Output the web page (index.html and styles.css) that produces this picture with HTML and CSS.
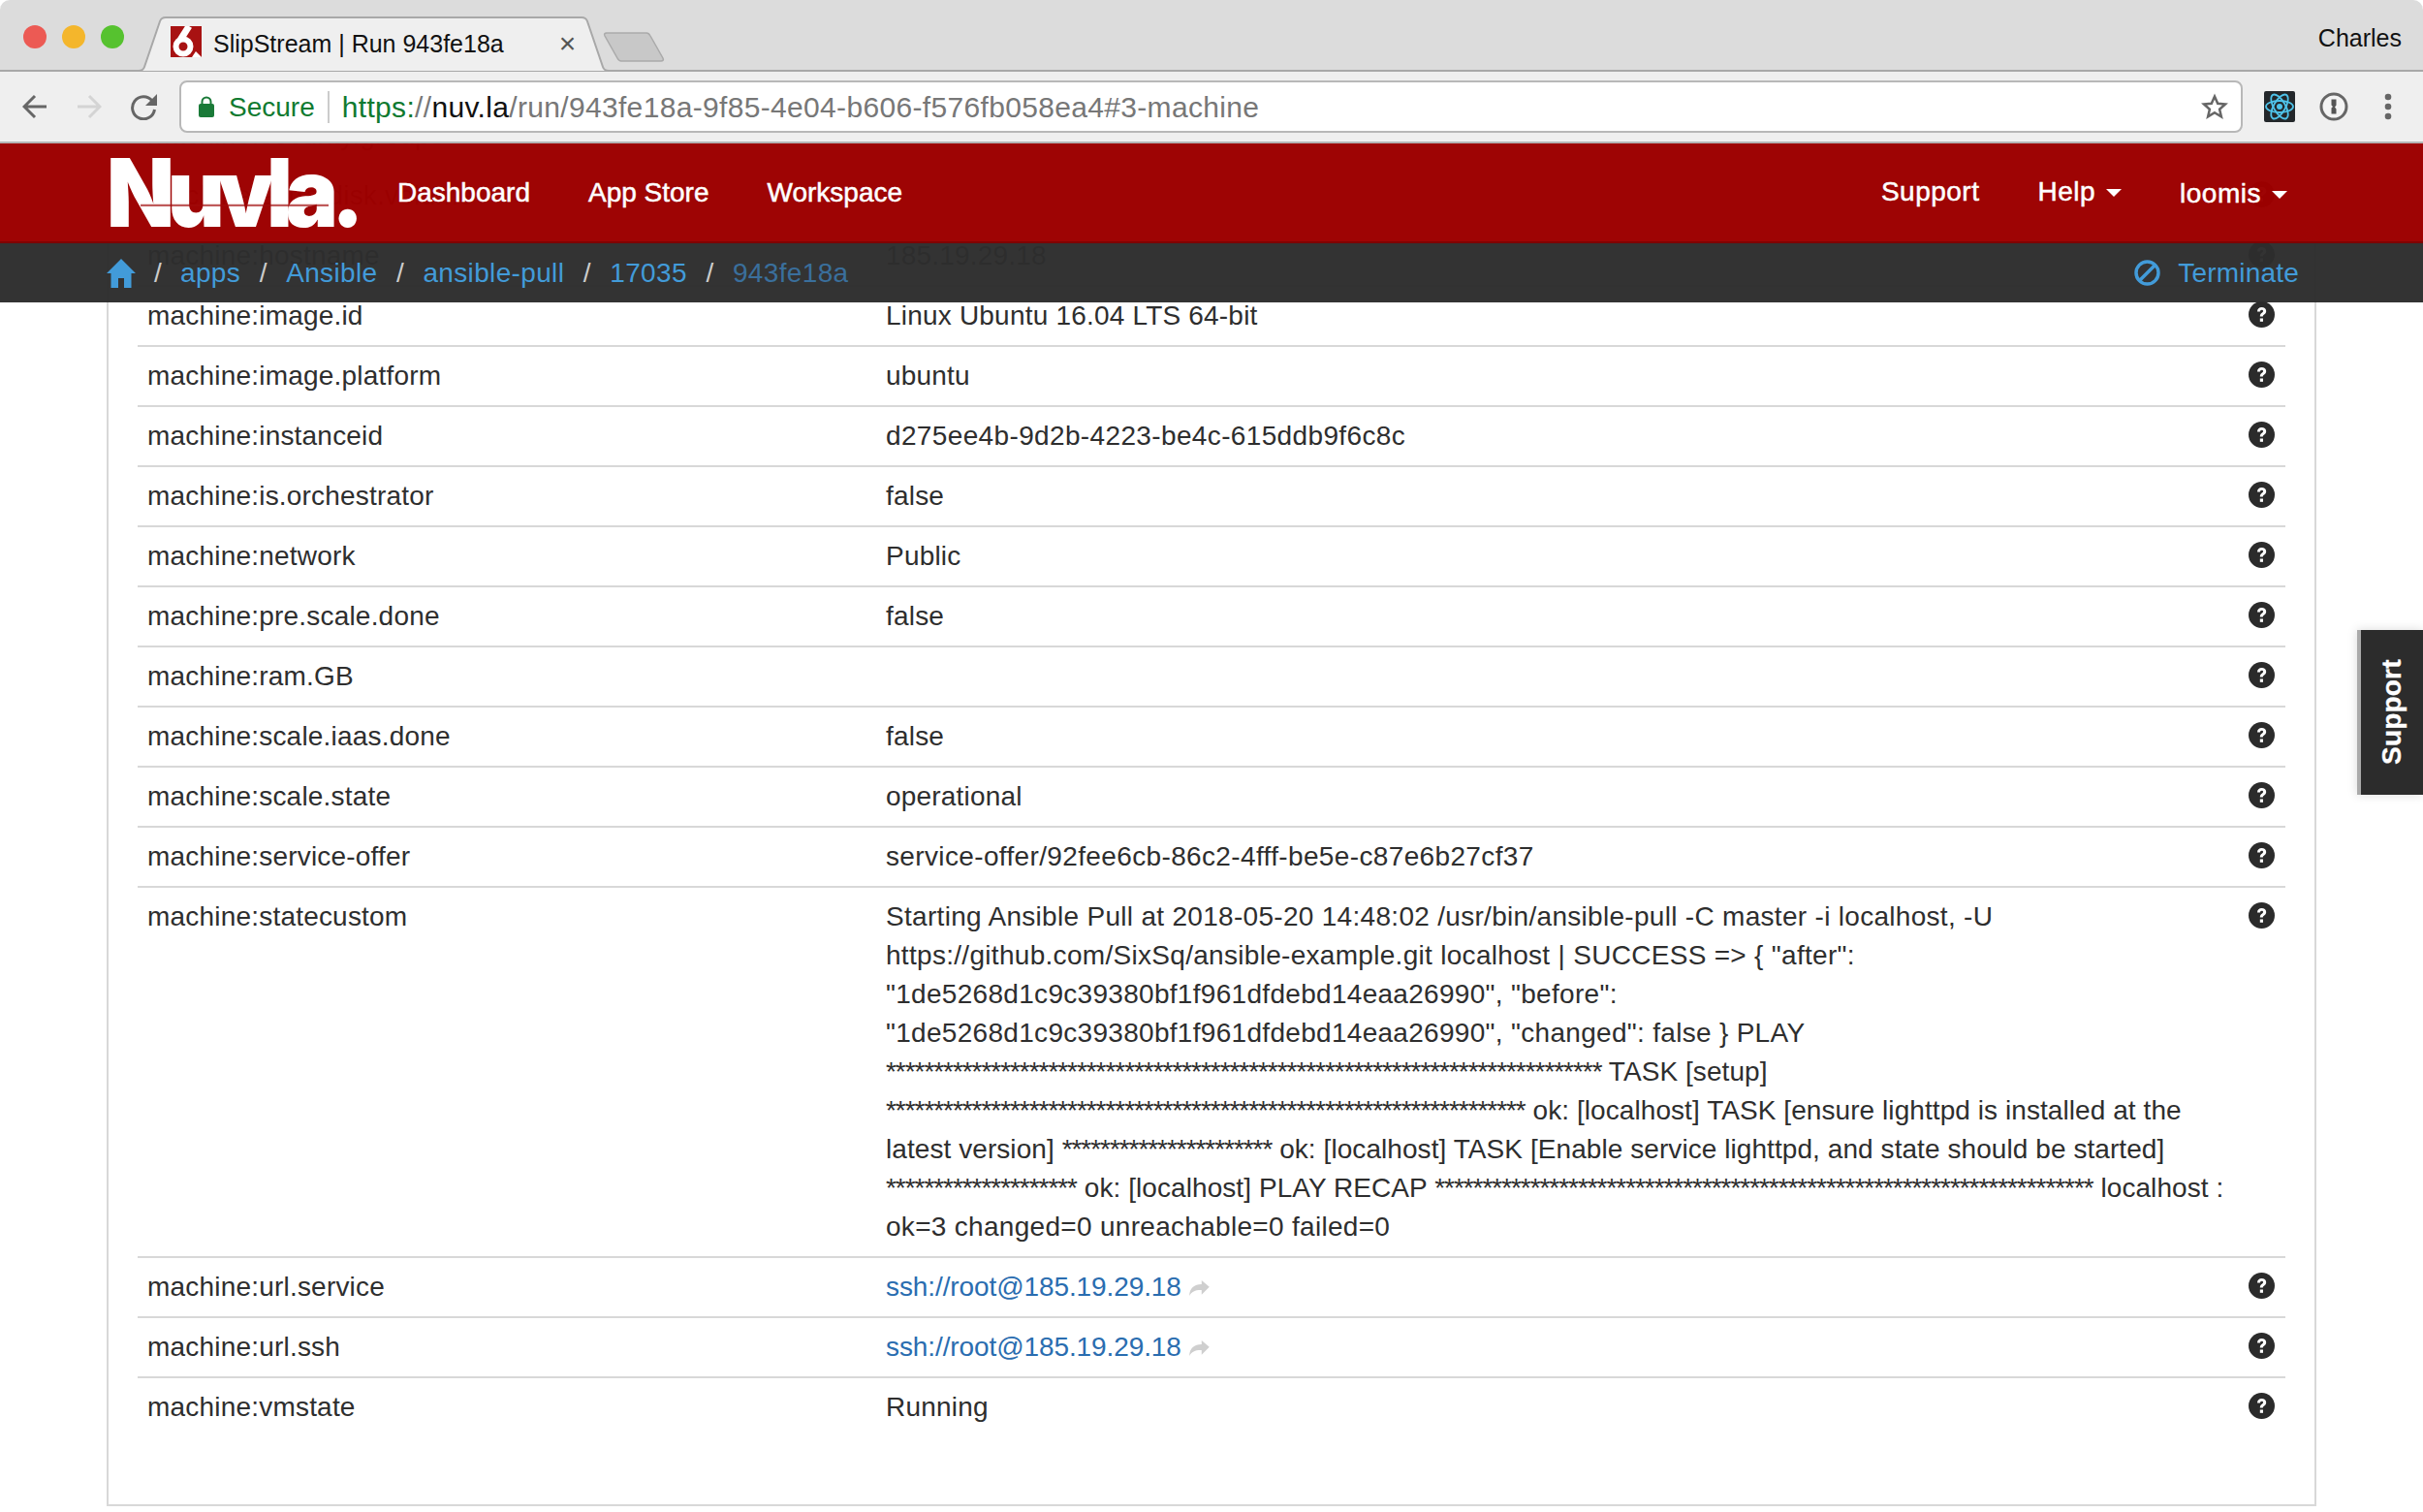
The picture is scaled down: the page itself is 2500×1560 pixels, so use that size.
FILE: index.html
```html
<!DOCTYPE html>
<html lang="en">
<head>
    <meta charset="UTF-8">
    <title>SlipStream | Run 943fe18a</title>
    <link rel="stylesheet" href="styles.css">
</head>
<body>
    <svg class="defs" width="0" height="0">
        <symbol id="help" viewBox="0 0 27 27">
            <circle cx="13.5" cy="13.5" r="13.5" fill="#2b2b2b"/>
            <path d="M9 10.5c0-2.8 2-4.5 4.6-4.5 2.5 0 4.6 1.6 4.6 4 0 3.4-3.4 3.2-3.4 5.6h-3c0-4 3.3-3.800 3.300-5.500 0-.9-.7-1.400-1.500-1.400-1 0-1.600.7-1.700 1.800z" fill="#fff"/>
            <rect x="11.800" y="17.500" width="3.200" height="3.300" fill="#fff"/>
        </symbol>
        <symbol id="share" viewBox="0 0 18 14">
            <path d="M18 6 11 0v3.500C4.500 3.500 0 7 0 14c2-4 5.500-5.500 11-5.300V13z" fill="#cfcfcf"/>
        </symbol>
    </svg>

    <div class="tabstrip">
        <div class="lights">
            <span class="light red"></span>
            <span class="light amber"></span>
            <span class="light green"></span>
        </div>
        <div class="tab">
            <svg class="tab-shape" viewBox="0 0 485 57" width="485" height="57">
                <path d="M0 56c3 0 5-1 6-4L22 5c1-3 3-4 6-4h429c3 0 5 1 6 4l16 47c1 3 3 4 6 4" fill="#efefef" stroke="#a8a8a8" stroke-width="2"/>
            </svg>
            <svg class="favicon" viewBox="0 0 32 32" width="32" height="32">
                <rect width="32" height="32" fill="#a81212"/>
                <path d="M19 0 7 19" stroke="#fff" stroke-width="7"/>
                <circle cx="13" cy="21" r="7.500" fill="#a81212" stroke="#fff" stroke-width="6"/>
                <path d="M22 32l4-6 6 6z" fill="#fff"/>
            </svg>
            <span class="tab-title">SlipStream | Run 943fe18a</span>
            <span class="tab-close">×</span>
        </div>
        <svg class="new-tab" viewBox="0 0 64 31" width="64" height="31">
            <path d="M4 1h41c2 0 3 1 4 3l13 23c1 2 0 3-2 3H19c-2 0-3-1-4-3L2 4C1 2 2 1 4 1z" fill="#c8c8c8" stroke="#aaa" stroke-width="1.500"/>
        </svg>
        <span class="profile">Charles</span>
    </div>

    <div class="toolbar">
        <svg class="tool-back" viewBox="0 0 26 26" width="26" height="26">
            <path d="M25 13H3M13 2 2 13l11 11" fill="none" stroke="#666" stroke-width="3"/>
        </svg>
        <svg class="tool-forward" viewBox="0 0 26 26" width="26" height="26">
            <path d="M1 13h22M13 2l11 11-11 11" fill="none" stroke="#d4d4d4" stroke-width="3"/>
        </svg>
        <svg class="tool-reload" viewBox="0 0 27 27" width="27" height="27">
            <path d="M22 7a11.500 11.500 0 1 0 2.500 9" fill="none" stroke="#666" stroke-width="3"/>
            <path d="M27 0v12H15z" fill="#666"/>
        </svg>
        <div class="omnibox">
            <svg class="lock" viewBox="0 0 16 22" width="16" height="22">
                <path d="M3.500 9V6a4.500 4.500 0 0 1 9 0v3" fill="none" stroke="#1a7a38" stroke-width="2"/>
                <rect y="8" width="16" height="14" rx="2" fill="#1a7a38"/>
            </svg>
            <span class="secure">Secure</span>
            <span class="omni-divider"></span>
            <span class="url"><span class="url-scheme">https:</span>//<span class="url-host">nuv.la</span>/run/943fe18a-9f85-4e04-b606-f576fb058ea4#3-machine</span>
            <svg class="star" viewBox="0 0 28 28" width="28" height="28">
                <path d="M14 3.500l3.200 7.300 7.800.7-5.900 5.200 1.800 7.700L14 20.300l-6.900 4.100 1.800-7.700L3 11.500l7.800-.7z" fill="none" stroke="#666" stroke-width="2.500"/>
            </svg>
        </div>
        <svg class="ext-react" viewBox="0 0 32 32" width="32" height="32">
            <rect width="32" height="32" rx="2" fill="#23272a"/>
            <g fill="none" stroke="#4fc3ea" stroke-width="1.800">
                <ellipse cx="16" cy="16" rx="14" ry="6"/>
                <ellipse cx="16" cy="16" rx="14" ry="6" transform="rotate(60 16 16)"/>
                <ellipse cx="16" cy="16" rx="14" ry="6" transform="rotate(120 16 16)"/>
            </g>
            <circle cx="16" cy="16" r="3" fill="#4fc3ea"/>
        </svg>
        <svg class="ext-pass" viewBox="0 0 30 30" width="30" height="30">
            <circle cx="15" cy="15" r="13" fill="#f4f4f4" stroke="#666" stroke-width="3"/>
            <path d="M12.500 7.500h5v6l-1.500 2 1.500 2v5h-5v-6l1.500-1.500-1.500-1.500z" fill="#555"/>
        </svg>
        <svg class="menu-dots" viewBox="0 0 8 28" width="8" height="28">
            <circle cx="4" cy="4" r="3.300" fill="#666"/>
            <circle cx="4" cy="14" r="3.300" fill="#666"/>
            <circle cx="4" cy="24" r="3.300" fill="#666"/>
        </svg>
    </div>

    <div class="page">
        <div class="panel">
            <table class="params">
                <tbody>
                    <tr><td>machine:security.groups</td><td></td><td class="help"></td></tr>
                    <tr><td>machine:extra.disk.volume</td><td></td><td class="help"><svg class="help-icon"><use href="#help"/></svg></td></tr>
                    <tr><td>machine:hostname</td><td>185.19.29.18</td><td class="help"><svg class="help-icon"><use href="#help"/></svg></td></tr>
                    <tr><td>machine:image.id</td><td>Linux Ubuntu 16.04 LTS 64-bit</td><td class="help"><svg class="help-icon"><use href="#help"/></svg></td></tr>
                    <tr><td>machine:image.platform</td><td>ubuntu</td><td class="help"><svg class="help-icon"><use href="#help"/></svg></td></tr>
                    <tr><td>machine:instanceid</td><td class="hash">d275ee4b-9d2b-4223-be4c-615ddb9f6c8c</td><td class="help"><svg class="help-icon"><use href="#help"/></svg></td></tr>
                    <tr><td>machine:is.orchestrator</td><td>false</td><td class="help"><svg class="help-icon"><use href="#help"/></svg></td></tr>
                    <tr><td>machine:network</td><td>Public</td><td class="help"><svg class="help-icon"><use href="#help"/></svg></td></tr>
                    <tr><td>machine:pre.scale.done</td><td>false</td><td class="help"><svg class="help-icon"><use href="#help"/></svg></td></tr>
                    <tr><td>machine:ram.GB</td><td></td><td class="help"><svg class="help-icon"><use href="#help"/></svg></td></tr>
                    <tr><td>machine:scale.iaas.done</td><td>false</td><td class="help"><svg class="help-icon"><use href="#help"/></svg></td></tr>
                    <tr><td>machine:scale.state</td><td>operational</td><td class="help"><svg class="help-icon"><use href="#help"/></svg></td></tr>
                    <tr><td>machine:service-offer</td><td class="hash">service-offer/92fee6cb-86c2-4fff-be5e-c87e6b27cf37</td><td class="help"><svg class="help-icon"><use href="#help"/></svg></td></tr>
                    <tr>
                        <td>machine:statecustom</td>
                        <td class="log">Starting Ansible Pull at 2018-05-20 14:48:02 /usr/bin/ansible-pull -C master -i localhost, -U<br>https://github.com/SixSq/ansible-example.git localhost | SUCCESS =&gt; { "after":<br>"1de5268d1c9c39380bf1f961dfdebd14eaa26990", "before":<br>"1de5268d1c9c39380bf1f961dfdebd14eaa26990", "changed": false } PLAY<br><span class="log-tail"><span class="stars">***************************************************************************</span> TASK [setup]<br><span class="stars">*******************************************************************</span> ok: [localhost] TASK [ensure lighttpd is installed at the<br>latest version] <span class="stars">**********************</span> ok: [localhost] TASK [Enable service lighttpd, and state should be started]<br><span class="stars">********************</span> ok: [localhost] PLAY RECAP <span class="stars">*********************************************************************</span> localhost :</span><br>ok=3 changed=0 unreachable=0 failed=0</td>
                        <td class="help"><svg class="help-icon"><use href="#help"/></svg></td>
                    </tr>
                    <tr><td>machine:url.service</td><td><a class="ext-link" href="#">ssh://root@185.19.29.18</a><svg class="share-icon"><use href="#share"/></svg></td><td class="help"><svg class="help-icon"><use href="#help"/></svg></td></tr>
                    <tr><td>machine:url.ssh</td><td><a class="ext-link" href="#">ssh://root@185.19.29.18</a><svg class="share-icon"><use href="#share"/></svg></td><td class="help"><svg class="help-icon"><use href="#help"/></svg></td></tr>
                    <tr class="last-row"><td>machine:vmstate</td><td>Running</td><td class="help"><svg class="help-icon"><use href="#help"/></svg></td></tr>
                </tbody>
            </table>
        </div>

        <header class="site-header">
            <nav class="navbar">
                <a class="brand" href="#">Nuvla.</a>
                <a class="nav-link" href="#">Dashboard</a>
                <a class="nav-link" href="#">App Store</a>
                <a class="nav-link" href="#">Workspace</a>
                <div class="nav-right">
                    <a class="nav-link" href="#">Support</a>
                    <a class="nav-link" href="#">Help<span class="caret"></span></a>
                    <a class="nav-link user" href="#">loomis<span class="caret"></span></a>
                </div>
            </nav>
            <div class="subbar">
                <svg class="home" viewBox="0 0 30 30" width="30" height="30">
                    <path d="M15 0 0 15h4.500v15h7.500v-10h6v10h7.500V15H30z" fill="#429bd9"/>
                </svg>
                <span class="sep first">/</span><a class="crumb" href="#">apps</a>
                <span class="sep">/</span><a class="crumb" href="#">Ansible</a>
                <span class="sep">/</span><a class="crumb" href="#">ansible-pull</a>
                <span class="sep">/</span><a class="crumb" href="#">17035</a>
                <span class="sep">/</span><span class="crumb current">943fe18a</span>
                <a class="terminate" href="#">
                    <svg viewBox="0 0 27 27" width="27" height="27">
                        <circle cx="13.500" cy="13.500" r="11.500" fill="none" stroke="#429bd9" stroke-width="3.500"/>
                        <path d="M6 21 21 6" stroke="#429bd9" stroke-width="3.500"/>
                    </svg>
                    Terminate
                </a>
            </div>
        </header>

        <div class="support-tab">Support</div>
    </div>
</body>
</html>
```

FILE: styles.css
```css
* {
    box-sizing: border-box;
}
html, body {
    margin: 0;
    height: 1560px;
    overflow: hidden;
    background-color: #fff;
}
body {
    font-family: "Liberation Sans", Arial, sans-serif;
    font-size: 28px;
    line-height: 40px;
    letter-spacing: 0.2px;
    color: #2e2e2e;
}
a {
    text-decoration: none;
}
.defs {
    position: absolute;
}

/* browser window */
.tabstrip {
    display: flex;
    height: 74px;
    background-color: #dcdcdc;
    box-shadow: inset 0 -2px 0 #a8a8a8;
    border-radius: 10px 10px 0 0;
    letter-spacing: 0;
}
.lights {
    display: flex;
    gap: 16px;
    padding: 26px 0 0 24px;
}
.light {
    width: 24px;
    height: 24px;
    border-radius: 50%;
}
.red {
    background-color: #ec5a54;
}
.amber {
    background-color: #f4b62c;
}
.green {
    background-color: #56c22f;
}
.tab {
    position: relative;
    display: flex;
    align-items: center;
    width: 485px;
    height: 57px;
    margin: 17px 0 0 15px;
    padding: 0 0 0 33px;
    font-size: 25px;
    color: #111;
}
.tab-shape {
    position: absolute;
    top: 0;
    left: 0;
}
.favicon, .tab-title, .tab-close {
    position: relative;
}
.favicon {
    top: -3px;
}
.tab-title {
    margin-left: 12px;
    top: -1px;
}
.tab-close {
    margin-left: 57px;
    top: -1px;
    font-size: 30px;
    color: #555;
}
.new-tab {
    margin: 33px 0 0 -6px;
}
.profile {
    margin-left: auto;
    padding: 19px 22px 0 0;
    font-size: 25px;
    color: #111;
}
.toolbar {
    display: flex;
    align-items: center;
    height: 74px;
    padding: 0 32px 0 23px;
    background-color: #efefef;
    border-bottom: 2px solid #b4b4b4;
    letter-spacing: 0;
}
.tool-forward {
    margin-left: 30px;
}
.tool-reload {
    margin-left: 30px;
}
.omnibox {
    display: flex;
    align-items: center;
    flex: 1;
    height: 54px;
    margin-left: 23px;
    padding: 0 13px 0 18px;
    background-color: #fff;
    border: 2px solid #b8b8b8;
    border-radius: 8px;
    white-space: nowrap;
}
.secure {
    margin: 2px 0 0 15px;
    color: #0f7a30;
}
.omni-divider {
    width: 2px;
    height: 33px;
    margin: 0 13px;
    background-color: #ccc;
}
.url {
    flex: 1;
    margin-top: 2px;
    font-size: 30px;
    letter-spacing: 0.33px;
    color: #777;
}
.url-scheme {
    color: #0f7a30;
}
.url-host {
    color: #111;
}
.ext-react {
    margin-left: 22px;
}
.ext-pass {
    margin-left: 25px;
}
.menu-dots {
    margin-left: 37px;
}

/* page */
.page {
    position: relative;
    height: 1412px;
    overflow: hidden;
}
.panel {
    margin: -38px 110px 0;
    height: 1444px;
    padding: 0 30px;
    border: 2px solid #d8d8d8;
    border-top: none;
}
.params {
    width: 100%;
    table-layout: fixed;
    border-collapse: separate;
    border-spacing: 0;
}
.params td {
    height: 62px;
    padding: 10px;
    vertical-align: top;
    border-bottom: 2px solid #d8d8d8;
    white-space: nowrap;
}
.params td:first-child {
    width: 762px;
}
.params .last-row td {
    border-bottom: none;
}
.params .help {
    width: 58px;
    padding: 15px 0 0 20px;
}
.params .hash {
    letter-spacing: 0.36px;
}
.params .log {
    letter-spacing: 0.3px;
}
.log-tail {
    letter-spacing: 0.07px;
}
.help-icon {
    display: block;
    width: 27px;
    height: 27px;
}
.stars {
    letter-spacing: -1.050px;
}
.ext-link {
    letter-spacing: -0.1px;
    color: #2a6db0;
}
.share-icon {
    width: 21px;
    height: 16px;
    margin-left: 8px;
}

/* site header, it stays on top of the scrolled table */
.site-header {
    position: absolute;
    top: 0;
    left: 0;
    right: 0;
}
.navbar {
    display: flex;
    align-items: center;
    gap: 60px;
    height: 103px;
    padding: 0 140px 0 110px;
    background-color: rgba(156, 0, 0, 0.985);
    border-bottom: 2px solid #7f0202;
    letter-spacing: 0;
}
.brand {
    position: relative;
    flex: none;
    width: 257px;
    margin-right: -17px;
    font-family: Inter, "Liberation Sans", sans-serif;
    font-size: 91px;
    font-weight: 900;
    line-height: 90px;
    letter-spacing: -7.200px;
    color: #fff;
    transform: scaleY(1.07);
}
.brand::after {
    content: "";
    position: absolute;
    left: 35px;
    right: 28px;
    top: 56px;
    height: 2px;
    background-color: rgba(160, 10, 10, 0.7);
}
.nav-link {
    color: #fff;
    -webkit-text-stroke: 0.5px #fff;
}
.nav-right {
    display: flex;
    gap: 60px;
    margin-left: auto;
    letter-spacing: 0.5px;
}
.user {
    margin-top: 2px;
}
.caret {
    display: inline-block;
    margin-left: 11px;
    vertical-align: middle;
    border-top: 8px solid #fff;
    border-left: 8px solid transparent;
    border-right: 8px solid transparent;
}
.subbar {
    display: flex;
    align-items: center;
    height: 61px;
    padding: 0 128px 0 110px;
    background-color: rgba(45, 45, 45, 0.973);
}
.sep {
    width: 47px;
    text-align: center;
    color: #ccc;
}
.sep.first {
    width: 46px;
}
.crumb {
    letter-spacing: 0.35px;
}
.crumb, .terminate {
    color: #429bd9;
}
.current {
    color: #3a6f9c;
}
.terminate {
    display: flex;
    align-items: center;
    gap: 18px;
    margin-left: auto;
}

.support-tab {
    position: absolute;
    top: 502px;
    right: 0;
    width: 68px;
    height: 170px;
    display: flex;
    align-items: center;
    justify-content: center;
    writing-mode: vertical-rl;
    transform: rotate(180deg);
    background-color: #2c2c2c;
    border-right: 4px solid #aaa;
    box-shadow: 0 0 10px rgba(0, 0, 0, 0.15);
    font-weight: bold;
    -webkit-text-stroke: 0.3px #fff;
    color: #fff;
}
```
